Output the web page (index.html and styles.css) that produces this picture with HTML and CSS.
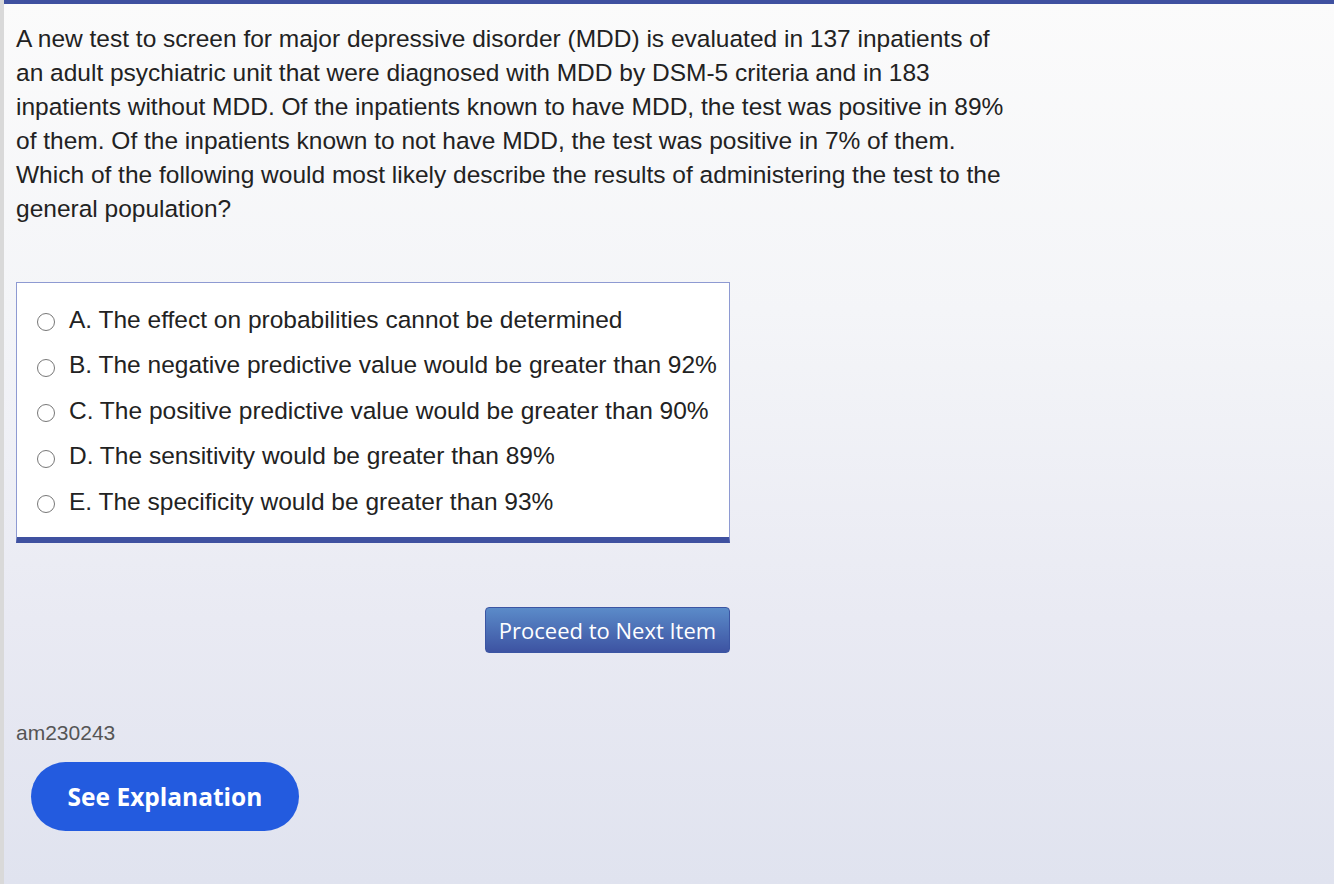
FILE: index.html
```html
<!DOCTYPE html>
<html>
<head>
<meta charset="utf-8">
<link rel="stylesheet" href="styles.css">
</head>
<body>
<div class="page">
  <div class="topbar"></div>
  <div class="content">
    <p class="stem">A new test to screen for major depressive disorder (MDD) is evaluated in 137 inpatients of an adult psychiatric unit that were diagnosed with MDD by DSM-5 criteria and in 183 inpatients without MDD. Of the inpatients known to have MDD, the test was positive in 89% of them. Of the inpatients known to not have MDD, the test was positive in 7% of them. Which of the following would most likely describe the results of administering the test to the general population?</p>
    <div class="options">
      <label class="opt"><span class="radio"></span><span>A. The effect on probabilities cannot be determined</span></label>
      <label class="opt"><span class="radio"></span><span>B. The negative predictive value would be greater than 92%</span></label>
      <label class="opt"><span class="radio"></span><span>C. The positive predictive value would be greater than 90%</span></label>
      <label class="opt"><span class="radio"></span><span>D. The sensitivity would be greater than 89%</span></label>
      <label class="opt"><span class="radio"></span><span>E. The specificity would be greater than 93%</span></label>
    </div>
    <div class="proceed-row">
      <button class="proceed">Proceed to Next Item</button>
    </div>
    <div class="qid">am230243</div>
    <button class="explain">See Explanation</button>
  </div>
</div>
</body>
</html>
```
FILE: styles.css
```css
html, body {
  margin: 0;
  padding: 0;
  height: 100%;
}
body {
  font-family: "Liberation Sans", Arial, sans-serif;
  color: #222;
}
.page {
  min-height: 884px;
  box-sizing: border-box;
  border-left: 4px solid #d9d9d9;
  background: linear-gradient(to bottom, #fbfbfb 0%, #f4f5f8 35%, #e9eaf3 70%, #e0e3ef 100%);
}
.topbar {
  height: 4px;
  background: #3f51a0;
}
.content {
  padding: 18px 0 0 12px;
}
.stem {
  margin: 0;
  width: 990px;
  font-size: 24.5px;
  line-height: 34px;
  color: #222;
}
.options {
  margin-top: 56px;
  width: 714px;
  box-sizing: border-box;
  background: #fff;
  border: 1px solid #8e9ad2;
  border-bottom: 6px solid #3f51a0;
  padding: 14px 0 12px 20px;
  display: flex;
  flex-direction: column;
}
.opt {
  display: flex;
  align-items: center;
  height: 45.5px;
  font-size: 24.5px;
  color: #222;
}
.radio {
  width: 18px;
  height: 18px;
  border: 1.5px solid #777;
  border-radius: 50%;
  box-sizing: border-box;
  margin-right: 14px;
  margin-top: 5px;
  background: #fff;
}
.proceed-row {
  width: 714px;
  display: flex;
  justify-content: flex-end;
  margin-top: 64px;
}
.proceed {
  width: 245px;
  height: 46px;
  border: 1px solid #3b55a3;
  border-radius: 4px;
  background: linear-gradient(to bottom, #5b8bc9, #3d53a2);
  color: #fff;
  font-family: "Open Sans", sans-serif;
  font-size: 22px;
  padding: 0;
}
.qid {
  margin-top: 68px;
  font-size: 21px;
  color: #555;
}
.explain {
  margin-top: 17px;
  margin-left: 15px;
  width: 268px;
  height: 69px;
  border: none;
  border-radius: 35px;
  background: #235bdf;
  color: #fff;
  font-family: "Open Sans", sans-serif;
  font-weight: 700;
  font-size: 24.5px;
  padding: 0;
}
```
